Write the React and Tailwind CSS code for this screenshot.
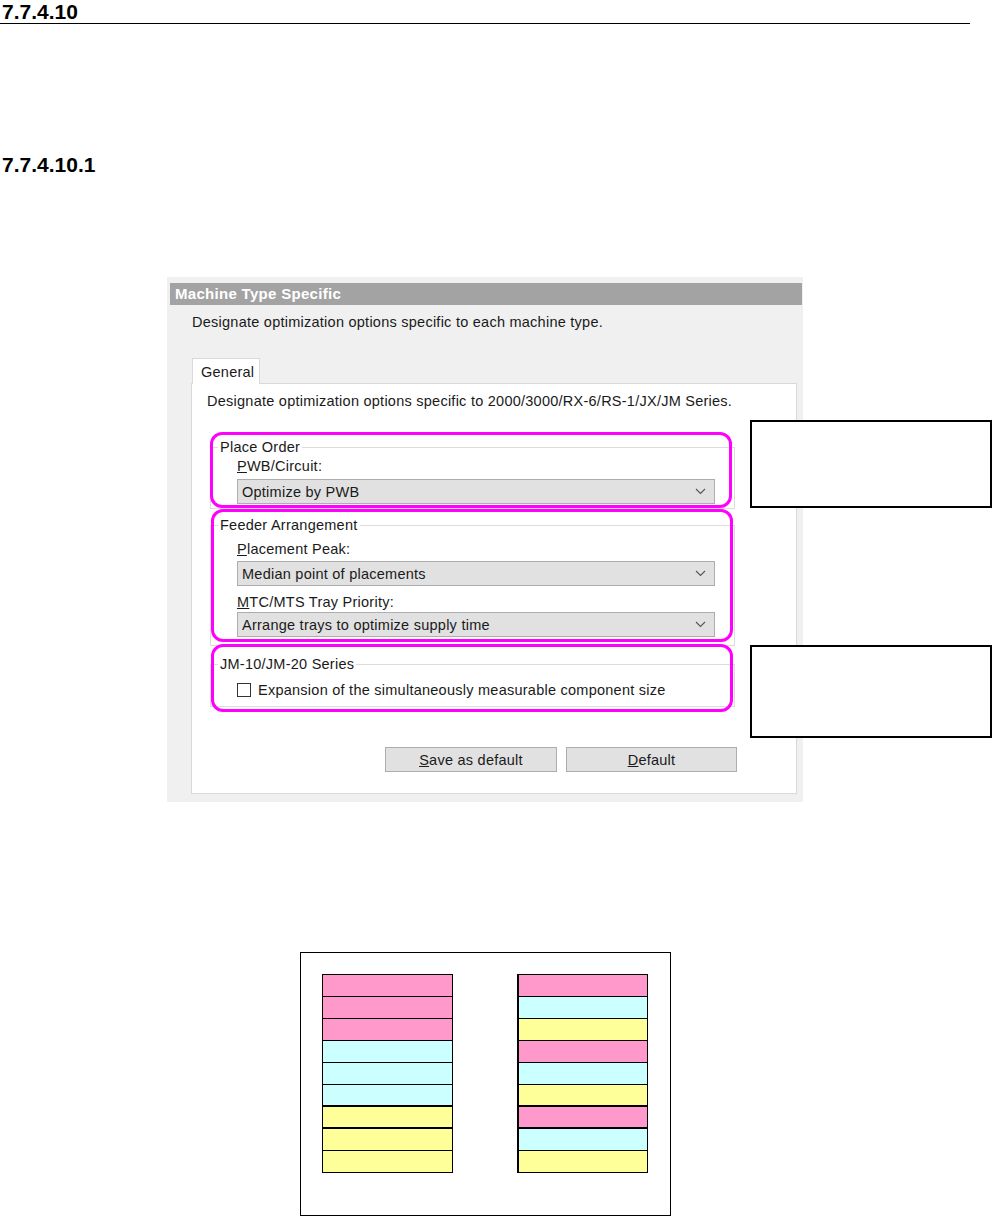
import React from 'react'

const pink = 'bg-[#ff99cc]'
const cyan = 'bg-[#ccffff]'
const yellow = 'bg-[#ffff99]'

const Chevron = () => (
  <svg width="11" height="7" viewBox="0 0 11 7">
    <path d="M1 1l4.5 4.5L10 1" fill="none" stroke="#555" strokeWidth="1.1" />
  </svg>
)

const Combo = ({ text }) => (
  <div className="flex h-[25px] w-[478px] items-center justify-between border border-[#adadad] bg-[#e1e1e1] pl-[4px] pr-[8px]">
    <span>{text}</span>
    <Chevron />
  </div>
)

const Mark = ({ className }) => (
  <div className={`absolute rounded-[12px] border-[3px] border-[#ff00ff] ${className}`} />
)

const Stack = ({ rows, thick, leftThick }) => (
  <div className={`flex w-[131px] flex-col border-t border-r border-black ${leftThick ? 'border-l-2' : 'border-l'}`}>
    {rows.map((c, i) => (
      <div key={i} className={`h-[22px] border-black ${c} ${thick.includes(i) ? 'border-b-2' : 'border-b'}`} />
    ))}
  </div>
)

const App = () => {
  return (
    <div className="relative h-[1217px] w-[993px] overflow-hidden bg-white font-['Liberation_Sans',Arial,sans-serif] text-black">
      {/* headings */}
      <div className="h-[24px] w-[970px] border-b border-black pl-[2px] text-[21px] font-bold leading-[23px]">7.7.4.10</div>
      <div className="mt-[129px] pl-[2px] text-[21px] font-bold leading-[23px]">7.7.4.10.1</div>

      {/* dialog + callouts */}
      <div className="relative mt-[101px]">
        <div className="ml-[167px] w-[636px] bg-[#f0f0f0] pb-[8px] pt-[6px] text-[14.5px] leading-[14px] tracking-[0.25px] text-[#1a1a1a]">
          <div className="ml-[3px] mr-[1px] flex h-[22px] items-center bg-[#a3a3a3] pl-[5px] text-[15px] font-bold tracking-[0.3px] text-white">
            Machine Type Specific
          </div>
          <p className="mt-[10px] pl-[25px]">Designate optimization options specific to each machine type.</p>

          <div className="relative z-10 -mb-px ml-[25px] mt-[29px] flex h-[26px] w-[68px] items-center border border-b-0 border-[#d9d9d9] bg-white pl-[8px]">
            General
          </div>
          <div className="ml-[24px] w-[606px] border border-[#d9d9d9] bg-white pb-[21px] pt-[10px]">
            <p className="pl-[15px]">Designate optimization options specific to 2000/3000/RX-6/RS-1/JX/JM Series.</p>

            <div className="relative ml-[18px] mt-[32px] w-[525px]">
              <fieldset className="border border-[#dcdcdc] pb-[4px]">
                <legend className="ml-[7px] px-[2px] leading-[14px]">Place Order</legend>
                <div className="pl-[26px]">
                  <div className="mt-[5px]"><span className="underline">P</span>WB/Circuit:</div>
                  <div className="mt-[6px]"><Combo text="Optimize by PWB" /></div>
                </div>
              </fieldset>
              <Mark className="-top-[8px] left-0 right-[3px] bottom-[1px]" />
            </div>

            <div className="relative ml-[18px] mt-[9px] w-[525px]">
              <fieldset className="border border-[#dcdcdc] pb-[8px]">
                <legend className="ml-[7px] px-[2px] leading-[14px]">Feeder Arrangement</legend>
                <div className="pl-[26px]">
                  <div className="mt-[10px]"><span className="underline">P</span>lacement Peak:</div>
                  <div className="mt-[5px]"><Combo text="Median point of placements" /></div>
                  <div className="mt-[9px]"><span className="underline">M</span>TC/MTS Tray Priority:</div>
                  <div className="mt-[3px]"><Combo text="Arrange trays to optimize supply time" /></div>
                </div>
              </fieldset>
              <Mark className="-top-[9px] left-[1px] right-[2px] bottom-[4px]" />
            </div>

            <div className="relative ml-[18px] mt-[11px] w-[525px]">
              <fieldset className="border border-[#dcdcdc] pb-[9px]">
                <legend className="ml-[7px] px-[2px] leading-[14px]">JM-10/JM-20 Series</legend>
                <div className="mt-[12px] flex items-center gap-[7px] pl-[26px]">
                  <div className="h-[14px] w-[14px] border border-[#333] bg-white" />
                  <span>Expansion of the simultaneously measurable component size</span>
                </div>
              </fieldset>
              <Mark className="-top-[13px] left-[1px] right-[2px] -bottom-[5px]" />
            </div>

            <div className="mt-[40px] flex gap-[9px] pl-[193px]">
              <button className="flex h-[25px] w-[172px] items-center justify-center border border-[#adadad] bg-[#e1e1e1]">
                <span><span className="underline">S</span>ave as default</span>
              </button>
              <button className="flex h-[25px] w-[171px] items-center justify-center border border-[#adadad] bg-[#e1e1e1]">
                <span><span className="underline">D</span>efault</span>
              </button>
            </div>
          </div>
        </div>

        <div className="absolute left-[750px] top-[143px] h-[88px] w-[242px] border-2 border-black bg-white" />
        <div className="absolute left-[750px] top-[368px] h-[93px] w-[242px] border-2 border-black bg-white" />
      </div>

      {/* placement diagram */}
      <div className="ml-[300px] mt-[150px] flex h-[264px] w-[371px] items-start gap-[64px] border border-black pl-[21px] pt-[21px]">
        <Stack rows={[pink, pink, pink, cyan, cyan, cyan, yellow, yellow, yellow]} thick={[5, 6]} />
        <Stack rows={[pink, cyan, yellow, pink, cyan, yellow, pink, cyan, yellow]} thick={[5, 6]} leftThick />
      </div>
    </div>
  )
}

export default App
